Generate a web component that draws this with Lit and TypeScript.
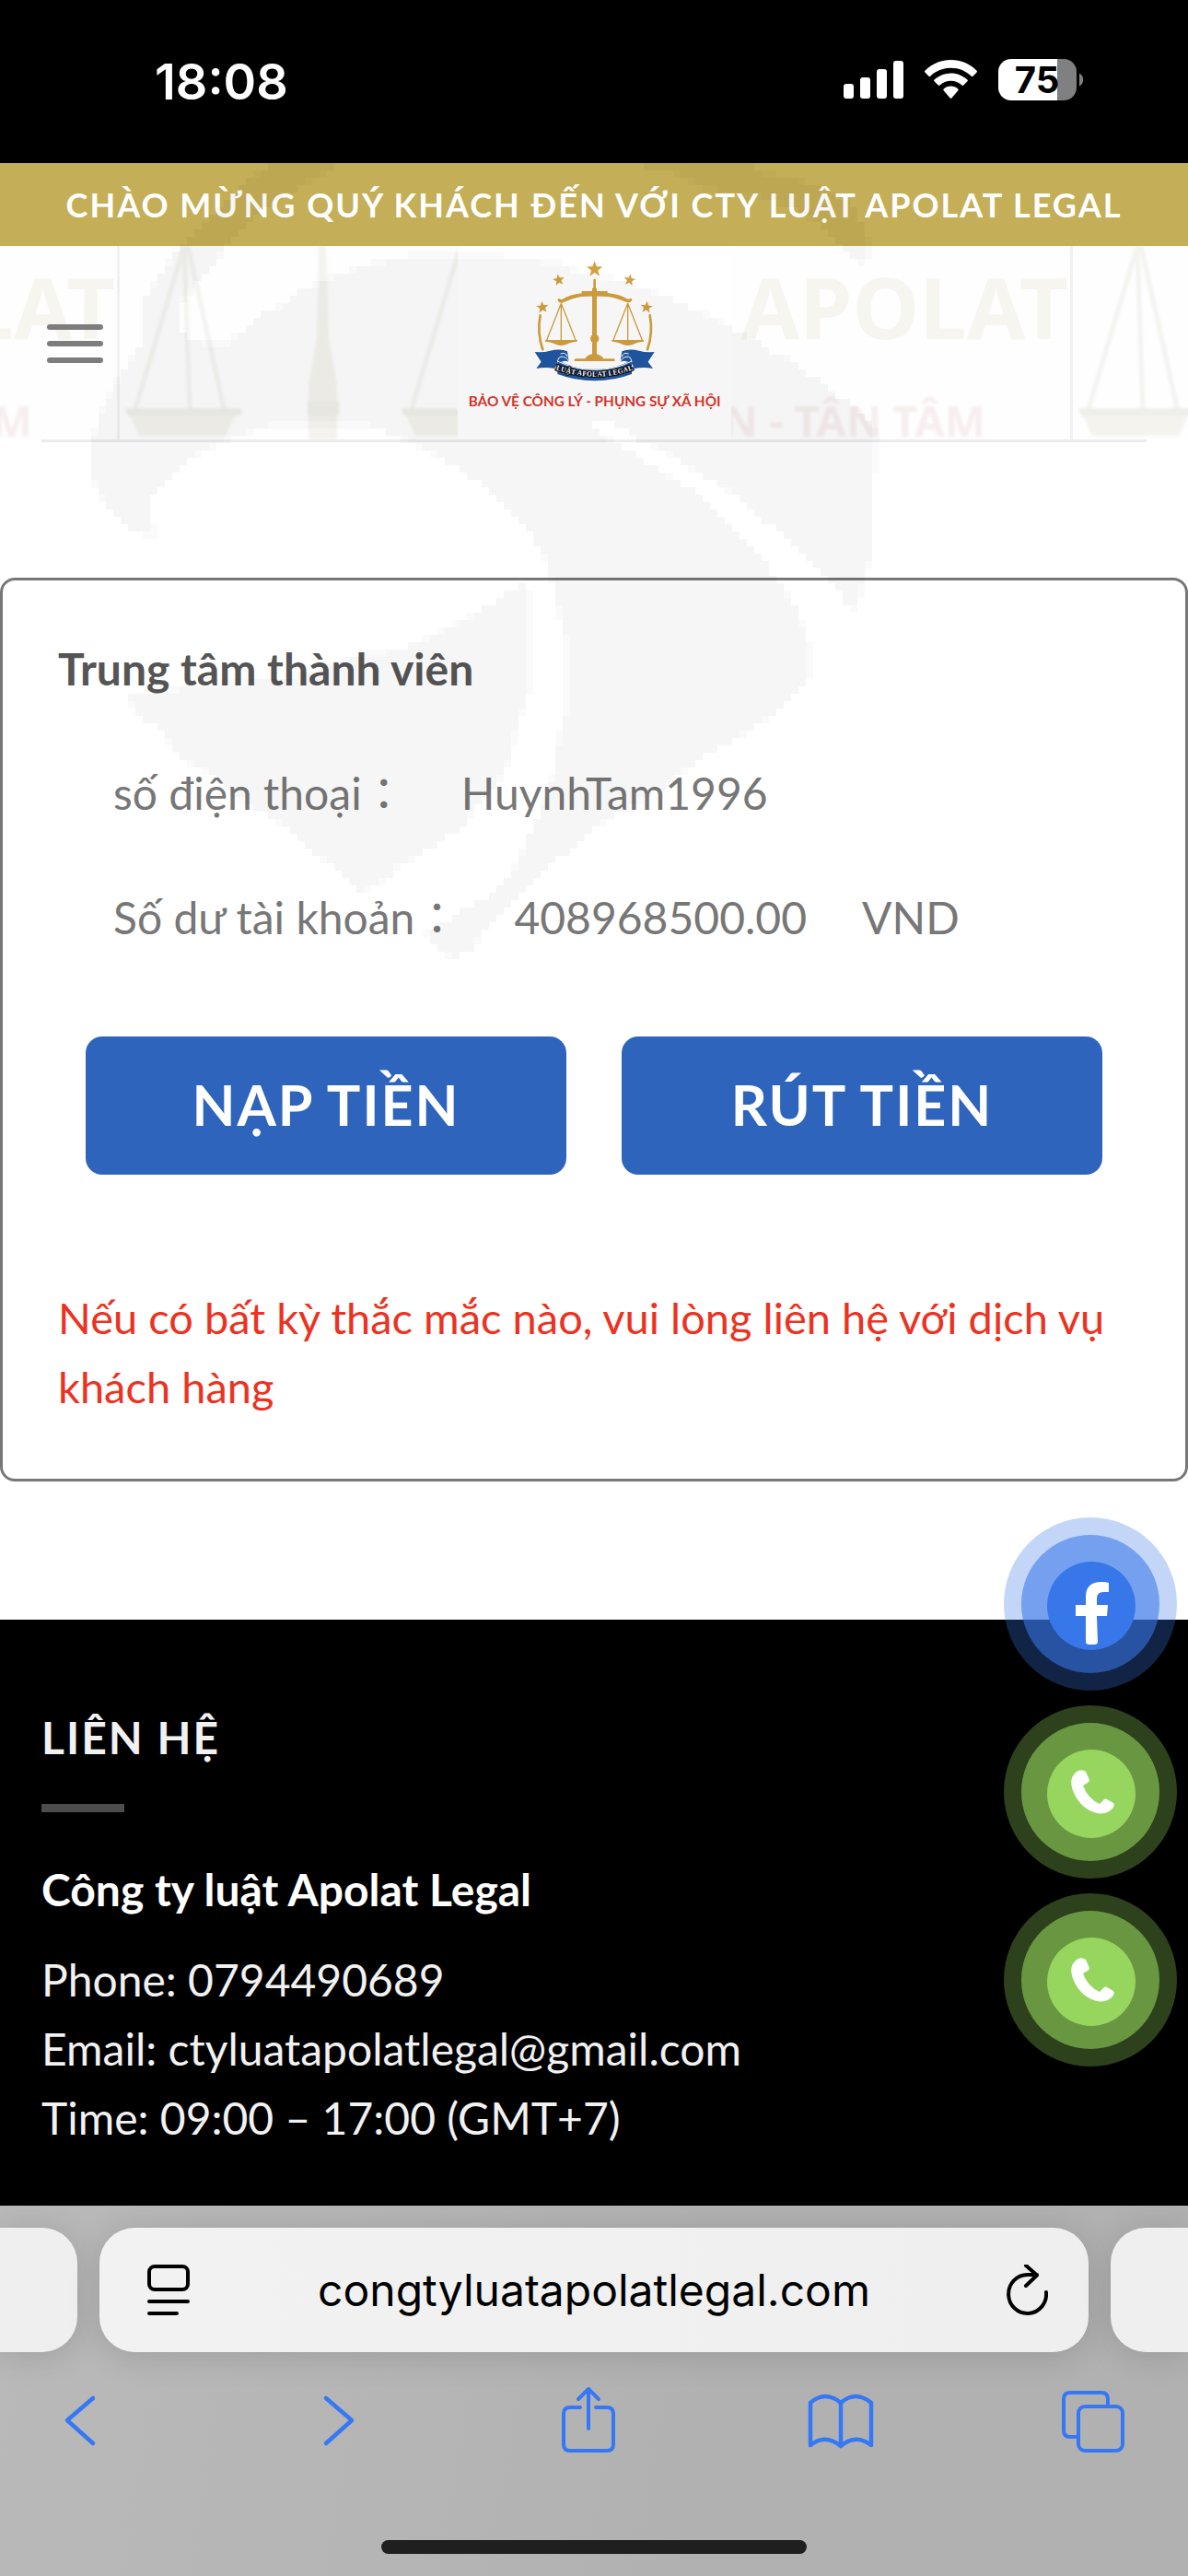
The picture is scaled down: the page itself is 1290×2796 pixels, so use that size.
import { LitElement, html, svg, css } from "lit";
import { customElement, property } from "lit/decorators.js";

type Point = [number, number];

/** Watermark silhouette, outlined in units of the 1290-wide canvas. */
const WATERMARK: Point[][] = [
  // wing, head and long tail
  [
    [296, 177], [270, 196], [246, 222], [218, 246], [204, 260], [196, 268], [188, 276], [179, 292], [171, 300],
    [163, 316], [155, 324], [155, 372], [147, 381], [139, 397], [131, 405], [123, 421], [115, 437], [107, 453],
    [99, 478], [99, 509], [107, 533], [115, 549], [123, 557], [131, 565], [139, 573], [155, 581], [171, 582],
    [171, 574], [163, 573], [163, 542], [179, 526], [195, 510], [212, 494], [228, 486], [244, 478], [268, 470],
    [292, 462], [316, 460], [388, 460], [405, 463], [437, 476], [453, 484], [470, 493], [485, 502], [505, 513],
    [528, 531], [551, 557], [568, 567], [582, 590], [591, 604], [600, 630], [607, 664], [615, 692], [615, 770],
    [607, 801], [600, 842], [591, 870], [568, 922], [556, 948], [533, 971], [508, 985], [482, 1002], [462, 1011],
    [470, 1025], [479, 1034], [496, 1042], [510, 1031], [528, 1011], [551, 988], [562, 974], [579, 956],
    [602, 936], [631, 913], [654, 893], [703, 865], [729, 847], [769, 819], [809, 796], [849, 770], [866, 750],
    [881, 733], [881, 710], [872, 681], [864, 658], [855, 644], [841, 629], [832, 609], [823, 600], [808, 585],
    [792, 566], [780, 557], [760, 535], [742, 526], [729, 518], [711, 508], [694, 494], [671, 482], [652, 470],
    [640, 458], [640, 454], [656, 457], [680, 466], [694, 480], [720, 489], [752, 509], [780, 526], [792, 534],
    [816, 550], [832, 567], [849, 575], [857, 590], [880, 607], [889, 622], [913, 644], [921, 661], [930, 662],
    [937, 630], [945, 606], [946, 518], [953, 517], [953, 462], [945, 457], [937, 448], [929, 440], [913, 433],
    [905, 423], [897, 415], [881, 407], [873, 400], [857, 390], [841, 383], [832, 377], [816, 367], [801, 360],
    [792, 353], [780, 349], [768, 340], [752, 335], [736, 327], [720, 320], [683, 308], [671, 302], [630, 297],
    [615, 287], [566, 280], [500, 276], [461, 276], [413, 284], [389, 292], [365, 300], [341, 309], [325, 317],
    [316, 327], [300, 333], [284, 341], [276, 350], [268, 360], [252, 365], [252, 372], [220, 372], [204, 365],
    [196, 357], [196, 325], [203, 323], [212, 310], [220, 297], [228, 292], [236, 283], [244, 270], [256, 256],
    [276, 236], [300, 218], [330, 200], [372, 177],
  ],
  // breast
  [
    [565, 632], [574, 638], [574, 753], [568, 773], [559, 801], [551, 830], [533, 862], [516, 876], [502, 899],
    [482, 910], [462, 925], [433, 939], [419, 956], [393, 968], [367, 948], [333, 916], [292, 885], [252, 864],
    [235, 844], [203, 827], [172, 793], [155, 778], [132, 753], [155, 753], [200, 747], [310, 735], [367, 721],
    [390, 712], [436, 704], [476, 687], [510, 669], [539, 652], [556, 641],
  ],
  // crescent at the upper right
  [
    [700, 177], [820, 177], [823, 188], [872, 196], [905, 210], [929, 226], [937, 245], [945, 260], [945, 284],
    [929, 284], [921, 274], [905, 260], [888, 244], [864, 226], [823, 214], [761, 204], [736, 188], [703, 184],
  ],
];

const CELL = 8;

function inside(x: number, y: number, ring: Point[]): boolean {
  let hit = false;
  for (let i = 0, j = ring.length - 1; i < ring.length; j = i++) {
    const [xi, yi] = ring[i];
    const [xj, yj] = ring[j];
    if (yi > y !== yj > y && x < ((xj - xi) * (y - yi)) / (yj - yi) + xi) hit = !hit;
  }
  return hit;
}

/** Turns the outlines into rows of square cells: fully covered and half covered ones. */
function rasterise(shapes: Point[][]): { full: string; half: string } {
  let full = "";
  let half = "";
  const samples = [2, 6];
  for (let y = 177; y < 1050; y += CELL) {
    for (let x = 91; x < 965; x += CELL) {
      let n = 0;
      for (const sx of samples) {
        for (const sy of samples) {
          if (shapes.some((ring) => inside(x + sx, y + sy, ring))) n++;
        }
      }
      const cell = `M${x} ${y}h${CELL}v${CELL}h-${CELL}z`;
      if (n >= 3) full += cell;
      else if (n === 2) half += cell;
    }
  }
  return { full, half };
}

const watermark = rasterise(WATERMARK);

function star(cx: number, cy: number, r: number, turn = 0): string {
  const pts: string[] = [];
  for (let i = 0; i < 10; i++) {
    const a = ((-90 + turn + i * 36) * Math.PI) / 180;
    const rr = i % 2 ? r * 0.42 : r;
    pts.push(`${(cx + rr * Math.cos(a)).toFixed(1)},${(cy + rr * Math.sin(a)).toFixed(1)}`);
  }
  return pts.join(" ");
}

@customElement("status-bar")
class StatusBar extends LitElement {
  static styles = css`
    :host {
      display: flex;
      justify-content: space-between;
      align-items: center;
      padding: 57px 113px 60px 168px;
      background: #000;
      color: #fff;
      font-family: Inter, "Liberation Sans", sans-serif;
    }
    .time {
      padding-top: 4px;
      font-size: 54px;
      line-height: 56px;
      font-weight: 600;
    }
    .signals {
      display: flex;
      align-items: center;
      gap: 23px;
    }
    svg {
      display: block;
      overflow: visible;
    }
    .level {
      font-size: 40px;
      font-weight: 700;
    }
  `;
  render() {
    return html`
      <span class="time">18:08</span>
      <div class="signals">
        <svg width="65" height="46" viewBox="0 0 65 46" fill="#fff" role="img" aria-label="Signal">
          <rect x="0" y="27" width="11" height="16" rx="3" />
          <rect x="18" y="20" width="11" height="23" rx="3" />
          <rect x="36" y="11" width="11" height="32" rx="3" />
          <rect x="54" y="2" width="11" height="41" rx="3" />
        </svg>
        <svg width="57" height="46" viewBox="0 0 57 46" fill="#fff" role="img" aria-label="Wi-Fi">
          <path d="M28.5 1C17.600 1 7.600 5.300 .4 12.700q-.8.900 0 1.800l4.100 4.200q.8.800 1.700 0C12 13 19.800 9.700 28.500 9.700S45 13 50.800 18.700q.9.800 1.700 0l4.100-4.200q.8-.9 0-1.800C49.400 5.300 39.400 1 28.500 1z" />
          <path d="M28.500 15.400c-6.900 0-13.200 2.700-17.900 7.100q-.9.900 0 1.800l4.200 4.200q.8.800 1.700 0c3.200-2.900 7.400-4.700 12-4.700s8.800 1.800 12 4.700q.9.800 1.700 0l4.200-4.200q.9-.9 0-1.800c-4.700-4.400-11-7.100-17.900-7.100z" />
          <path d="M28.500 29.600c-3 0-5.800 1.200-7.900 3.100q-.8.800 0 1.600l6.900 7.900q1 1 2 0l6.900-7.900q.8-.8 0-1.600c-2.100-1.900-4.900-3.100-7.900-3.100z" />
        </svg>
        <svg width="93" height="46" viewBox="0 0 93 46" role="img" aria-label="Battery">
          <path d="M14 0H64V45H14A14 14 0 0 1 0 31V14A14 14 0 0 1 14 0z" fill="#fff" />
          <path d="M64 0h7a14 14 0 0 1 14 14v17a14 14 0 0 1-14 14h-7z" fill="#808080" />
          <path d="M88 15.500a8 8 0 0 1 0 14z" fill="#808080" />
          <text class="level" x="42" y="37" text-anchor="middle">75</text>
        </svg>
      </div>
    `;
  }
}

@customElement("site-header")
class SiteHeader extends LitElement {
  static styles = css`
    :host {
      display: block;
      font-family: Lato, "Noto Sans", sans-serif;
    }
    .welcome {
      margin: 0;
      background: #c4ae57;
      color: #fff;
      text-align: center;
      white-space: nowrap;
      font-size: 36px;
      line-height: 90px;
      font-weight: 700;
      letter-spacing: 2px;
    }
    .masthead {
      position: relative;
      display: grid;
      grid-template-columns: 1fr auto 1fr;
      align-items: center;
    }
    .backdrop {
      position: absolute;
      inset: 0;
      width: 100%;
      height: 100%;
    }
    .menu {
      position: relative;
      justify-self: start;
      margin-left: 39px;
      padding: 14px 12px 12px;
      border: 0;
      background: none;
      cursor: pointer;
    }
    .home {
      position: relative;
      background: #fff;
    }
    svg {
      display: block;
    }
    .rule {
      height: 3px;
      margin: 0 45px;
      border: 0;
      background: #ececec;
    }
    .ghost-name {
      font-family: "Noto Sans", sans-serif;
      font-size: 92px;
      font-weight: 700;
    }
    .ghost-motto {
      font-family: "Noto Sans", sans-serif;
      font-size: 47px;
      font-weight: 700;
    }
    .motto {
      font-family: Lato, sans-serif;
      font-size: 46px;
      font-weight: 700;
    }
    .ribbon {
      font-family: "Liberation Serif", serif;
      font-size: 24px;
      font-weight: 700;
    }
  `;

  private pan(cx: number) {
    return svg`
      <path d="M${cx} 0L${cx - 54} 180M${cx} 0L${cx + 6} 180M${cx + 4} 0L${cx + 44} 180" stroke="#f3f3ef" stroke-width="5" fill="none" />
      <path d="M${cx - 62} 178h120l-13 28h-94z" fill="#f4f3ee" />
      <path d="M${cx - 64} 176h126v8h-124z" fill="#efefea" />
    `;
  }

  private tile(x: number) {
    return svg`
      <g transform="translate(${x} 0)">
        <rect x="-1" y="0" width="3" height="210" fill="#f1f1f2" />
        <g filter="url(#soft)">
          ${this.pan(72)} ${this.pan(372)}
          <path d="M218 0h8l3 100 9 50v60h-31v-60l9-50z" fill="#f4f3ee" />
          <path d="M206 168h34v16h-34z" fill="#f0efe9" />
          <text class="ghost-motto" x="942" y="207" text-anchor="end" fill="#f7eeee">N - TÂN TÂM</text>
        </g>
        <text class="ghost-name" x="1032" y="101" text-anchor="end" fill="#f6f5ef">APOLAT</text>
      </g>
    `;
  }

  render() {
    const gold = "#d3a040";
    const scale = (cx: number) => svg`
      <path d="M${cx} 208L${cx - 48} 330M${cx} 208V330M${cx} 208L${cx + 48} 330" stroke=${gold} stroke-width="4" fill="none" />
      <path d="M${cx - 52} 327h104v5q-24 3-36 10-16 6-32 0-12-7-36-10z" fill=${gold} />
    `;
    return html`
      <p class="welcome">CHÀO MỪNG QUÝ KHÁCH ĐẾN VỚI CTY LUẬT APOLAT LEGAL</p>
      <div class="masthead">
        <svg class="backdrop" viewBox="0 0 1290 210" preserveAspectRatio="xMidYMid slice" aria-hidden="true">
          <defs><filter id="soft"><feGaussianBlur stdDeviation="1.500" /></filter></defs>
          <rect width="1290" height="210" fill="#fefefe" />
          ${this.tile(-907)} ${this.tile(128)} ${this.tile(1163)}
        </svg>
        <button class="menu" aria-label="Menu">
          <svg width="61" height="43" viewBox="0 0 61 43" fill="#7d7d7d">
            <rect y="0" width="61" height="6" rx="3" />
            <rect y="18" width="61" height="6" rx="3" />
            <rect y="36" width="61" height="6" rx="3" />
          </svg>
        </button>
        <a class="home" href="#" aria-label="Luật Apolat Legal">
          <svg width="297" height="210" viewBox="51 21 891 630">
            <g fill=${gold}>
              <polygon points=${star(497, 97, 27)} />
              <polygon points=${star(380, 132, 20, -10)} />
              <polygon points=${star(611, 132, 20, 10)} />
              <polygon points=${star(327, 221, 21, -6)} />
              <polygon points=${star(666, 221, 21, 6)} />
              <rect x="493" y="128" width="8" height="40" rx="3" />
              <path d="M489 158h15v215q10 3 17 8 4 4 3 7h36q4 1 3 8H431q-2-7 4-8h32q0-6 8-10 8-4 14-5z" />
              <circle cx="497" cy="323" r="14" />
              <path d="M455 168h84v6q40 4 66 20 6 0 8-3 8 0 5 8-4 8-14 6-40-16-64-19-45-3-86 0-26 4-62 20-10 2-14-6-4-9 4-8 3 4 9 3 26-16 64-20z" />
            </g>
            ${scale(388)} ${scale(605)}
            <path d="M320 247Q309 305 328 358M677 247Q688 305 669 358" stroke=${gold} stroke-width="8" fill="none" stroke-linecap="round" />
            <g fill="#2158a3">
              <path d="M302 366q30 2 50-4 34-8 56 2l5 34q-20-8-38 8l-8 14q-30-6-60 0l16-22z" />
              <path d="M692 366q-30 2-50-4-34-8-56 2l-5 34q20-8 38 8l8 14q30-6 60 0l-16-22z" />
              <path d="M376 392q60 34 121 30 62 4 121-30v46q-58 22-121 22t-121-22z" />
            </g>
            <path d="M376 400q2-22 18-18 14 2 20 18M386 372q18-6 22 10M618 400q-2-22-18-18-14 2-20 18M608 372q-18-6-22 10M376 396q60 30 121 28 62 2 121-28" stroke="#fff" stroke-width="3" fill="none" />
            <path id="band" d="M356 418Q497 474 638 418" fill="none" />
            <text class="ribbon" fill="#fff" stroke="#0a0f1c" stroke-width="8" stroke-linejoin="round" paint-order="stroke" text-anchor="middle">
              <textPath href="#band" startOffset="50%">LUẬT APOLAT LEGAL</textPath>
            </text>
            <text class="motto" x="497" y="542" text-anchor="middle" fill="#d5392f">BẢO VỆ CÔNG LÝ - PHỤNG SỰ XÃ HỘI</text>
          </svg>
        </a>
      </div>
      <hr class="rule" />
    `;
  }
}

@customElement("member-card")
class MemberCard extends LitElement {
  @property() account = "HuynhTam1996";
  @property() balance = "408968500.00";

  static styles = css`
    :host {
      display: block;
      border: 3px solid #777;
      border-radius: 16px;
      padding: 58px 60px 62px;
      font-family: Lato, "Noto Sans CJK JP", sans-serif;
      font-size: 48px;
      line-height: 75px;
      color: #777;
    }
    h1 {
      margin: 0 0 60px;
      font-size: 48px;
      line-height: 75px;
      font-weight: 700;
      color: #555;
    }
    .facts {
      display: grid;
      gap: 60px;
      margin: 0 0 92px;
      padding-left: 60px;
    }
    .fact {
      display: flex;
      gap: 60px;
    }
    dt,
    dd {
      margin: 0;
      height: 75px;
      white-space: nowrap;
    }
    .actions {
      display: grid;
      grid-template-columns: 1fr 1fr;
      gap: 60px;
      margin: 0 30px 118px;
    }
    button {
      padding: 0 0 4px;
      border: 0;
      border-radius: 18px;
      background: #2e64bc;
      color: #fff;
      font-family: Lato, sans-serif;
      font-size: 61px;
      line-height: 75px;
      height: 150px;
      font-weight: 700;
      letter-spacing: 2px;
      cursor: pointer;
    }
    .notice {
      margin: 0;
      font-size: 47px;
      color: #ea3323;
    }
  `;
  render() {
    return html`
      <h1>Trung tâm thành viên</h1>
      <dl class="facts">
        <div class="fact">
          <dt>số điện thoại：</dt>
          <dd>${this.account}</dd>
        </div>
        <div class="fact">
          <dt>Số dư tài khoản：</dt>
          <dd>${this.balance}</dd>
          <dd>VND</dd>
        </div>
      </dl>
      <div class="actions">
        <button>NẠP TIỀN</button>
        <button>RÚT TIỀN</button>
      </div>
      <p class="notice">Nếu có bất kỳ thắc mắc nào, vui lòng liên hệ với dịch vụ khách hàng</p>
    `;
  }
}

@customElement("site-footer")
class SiteFooter extends LitElement {
  static styles = css`
    :host {
      display: block;
      padding: 90px 45px 58px;
      background: #000;
      color: #f1f1f1;
      font-family: Lato, "Noto Sans", sans-serif;
      font-size: 48px;
      line-height: 75px;
    }
    h2 {
      margin: 0;
      font-size: 48px;
      font-weight: 700;
      letter-spacing: 2px;
    }
    .bar {
      width: 90px;
      height: 9px;
      margin: 35px 0 46px;
      background: #4d4d4d;
    }
    h3 {
      margin: 0 0 23px;
      font-size: 48px;
      font-weight: 700;
      color: #fff;
    }
    address {
      font-style: normal;
    }
    .line {
      display: block;
    }
    a {
      color: inherit;
      text-decoration: none;
    }
  `;
  render() {
    return html`
      <h2>LIÊN HỆ</h2>
      <div class="bar"></div>
      <h3>Công ty luật Apolat Legal</h3>
      <address>
        <span class="line">Phone: <a href="tel:0794490689">0794490689</a></span>
        <span class="line">Email: <a href="mailto:ctyluatapolatlegal@gmail.com">ctyluatapolatlegal@gmail.com</a></span>
        <span class="line">Time: 09:00 – 17:00 (GMT+7)</span>
      </address>
    `;
  }
}

@customElement("contact-bubbles")
class ContactBubbles extends LitElement {
  static styles = css`
    :host {
      display: flex;
      flex-direction: column;
      gap: 16px;
    }
    a {
      display: block;
      border-radius: 50%;
    }
    svg {
      display: block;
    }
    .chat {
      color: #3877e9;
    }
    .call {
      color: #96d65e;
    }
  `;
  private rings = svg`
    <g fill="currentColor">
      <circle cx="94" cy="94" r="94" opacity="0.300" />
      <circle cx="94" cy="94" r="75" opacity="0.570" />
      <circle cx="95" cy="96" r="48" />
    </g>
  `;
  private phone() {
    return html`
      <a class="call" href="tel:0794490689" aria-label="Gọi điện">
        <svg width="188" height="188" viewBox="0 0 188 188">
          ${this.rings}
          <path d="M78 73q4-4 9-2 1 0 2 1l4 9q0 2-2 3l-5 3q5 14 18 20l5-5q2-1 3 0l7 4q2 2-1 6-6 7-17 5-16-4-24-20-8-16 1-24z" fill="#fff" />
        </svg>
      </a>
    `;
  }
  render() {
    return html`
      <a class="chat" href="#" aria-label="Facebook">
        <svg width="188" height="188" viewBox="0 0 188 188">
          ${this.rings}
          <path d="M89 135V107H78V95h11V86q0-16 17-16 5 0 8 1v10h-6q-7 0-7 7v7h12l-1 12h-11l1 28q0 3-4 3h-5q-4 0-4-3z" fill="#fff" />
        </svg>
      </a>
      ${this.phone()} ${this.phone()}
    `;
  }
}

@customElement("browser-toolbar")
class BrowserToolbar extends LitElement {
  static styles = css`
    :host {
      display: block;
      overflow: hidden;
      padding: 24px 0;
      background: linear-gradient(100deg, #b9b9b9, #b5b5b5 35%, #b1b1b1 60%);
      font-family: Inter, "Liberation Sans", sans-serif;
    }
    .tabs {
      display: grid;
      grid-template-columns: 84px 1fr 84px;
      gap: 24px;
    }
    .tab {
      background: #efefef;
      box-shadow: 0 4px 36px rgba(0, 0, 0, 0.14);
      height: 135px;
    }
    .previous {
      border-radius: 0 38px 38px 0;
    }
    .next {
      border-radius: 38px 0 0 38px;
    }
    .current {
      display: flex;
      justify-content: space-between;
      align-items: center;
      padding: 0 44px;
      border-radius: 38px;
      background: linear-gradient(90deg, #f2f2f2, #efefef);
    }
    button {
      padding: 0;
      border: 0;
      background: none;
      color: inherit;
      font: inherit;
      cursor: pointer;
    }
    .address {
      font-size: 48px;
      line-height: 60px;
      color: #000;
    }
    .actions {
      display: flex;
      justify-content: space-between;
      margin: 37px 66px 95px 51px;
      color: #3478f6;
    }
    svg {
      display: block;
      fill: none;
      stroke: currentColor;
      stroke-linecap: round;
      stroke-linejoin: round;
    }
    .current svg {
      color: #000;
    }
    .indicator {
      width: 462px;
      height: 15px;
      margin: 0 auto;
      border-radius: 8px;
      background: #1f1f1f;
    }
  `;
  render() {
    return html`
      <div class="tabs">
        <div class="tab previous"></div>
        <div class="tab current">
          <button aria-label="Page menu">
            <svg width="54" height="56" viewBox="-8 0 54 56" stroke-width="4">
              <rect x="2" y="2" width="42" height="25" rx="6" />
              <path d="M2 40H44M2 53H32" />
            </svg>
          </button>
          <button class="address">congtyluatapolatlegal.com</button>
          <button aria-label="Reload">
            <svg width="54" height="56" viewBox="-9 2 54 56" stroke-width="4">
              <path d="M43 32A20.500 21 0 1 1 22.500 13H33M21 3L33 13.500 21 25" />
            </svg>
          </button>
        </div>
        <div class="tab next"></div>
      </div>
      <div class="actions">
        <button aria-label="Back">
          <svg width="72" height="72" viewBox="0 0 72 72" stroke-width="4.500">
            <path d="M50 13L22 37 50 62" />
          </svg>
        </button>
        <button aria-label="Forward">
          <svg width="72" height="72" viewBox="0 0 72 72" stroke-width="4.500">
            <path d="M28 13L56 37 28 62" />
          </svg>
        </button>
        <button aria-label="Share">
          <svg width="72" height="72" viewBox="2 0 72 72" stroke-width="4">
            <path d="M30 23H19Q12 23 12 30V63Q12 70 19 70H59Q66 70 66 63V30Q66 23 59 23H47" />
            <path d="M39 46V3M28 14L39 3 50 14" />
          </svg>
        </button>
        <button aria-label="Bookmarks">
          <svg width="72" height="72" viewBox="2 0 72 72" stroke-width="4.500">
            <path d="M38 18V65Q21 51 5 64V18Q21 4 38 18Q54 4 71 18V64Q54 51 38 65" />
          </svg>
        </button>
        <button aria-label="Tabs">
          <svg width="72" height="72" viewBox="2 0 72 72" stroke-width="4">
            <rect x="21" y="22" width="48" height="48" rx="7" />
            <path d="M53 20V14Q53 7 46 7H12Q5 7 5 14V48Q5 55 12 55H19" />
          </svg>
        </button>
      </div>
      <div class="indicator"></div>
    `;
  }
}

@customElement("app-root")
class AppRoot extends LitElement {
  static styles = css`
    :host {
      display: block;
      background: #fff;
    }
    .page {
      position: relative;
    }
    .content {
      padding: 147px 0 150px;
    }
    .watermark {
      position: absolute;
      top: 0;
      left: 0;
      width: 100%;
      pointer-events: none;
    }
    .bubbles {
      position: absolute;
      right: 12px;
      bottom: 151px;
    }
  `;
  render() {
    return html`
      <status-bar></status-bar>
      <div class="page">
        <site-header></site-header>
        <main class="content">
          <member-card></member-card>
        </main>
        <site-footer></site-footer>
        <svg class="watermark" viewBox="0 177 1290 880" shape-rendering="crispEdges" aria-hidden="true">
          <path d=${watermark.full} fill="#000" opacity="0.037" />
          <path d=${watermark.half} fill="#000" opacity="0.020" />
        </svg>
        <contact-bubbles class="bubbles"></contact-bubbles>
      </div>
      <browser-toolbar></browser-toolbar>
    `;
  }
}
